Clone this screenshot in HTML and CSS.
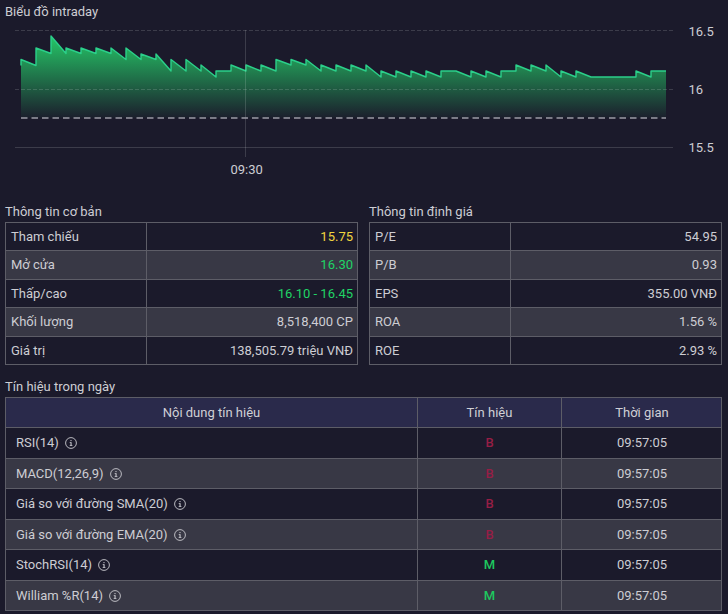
FILE: index.html
```html
<!DOCTYPE html>
<html lang="vi">
<head>
<meta charset="utf-8">
<title>Biểu đồ intraday</title>
<link rel="stylesheet" href="styles.css">
</head>
<body>
<svg width="0" height="0" class="defs" aria-hidden="true">
  <defs>
    <symbol id="info" viewBox="0 0 12 12">
      <circle cx="6" cy="6" r="5.4" fill="none" stroke="currentColor" stroke-width="0.9"/>
      <rect x="5.5" y="5.2" width="1.1" height="3.4" fill="currentColor"/>
      <rect x="4.7" y="5.1" width="1.2" height="0.8" fill="currentColor"/>
      <rect x="4.7" y="8" width="2.7" height="0.8" fill="currentColor"/>
      <circle cx="6" cy="3.6" r="0.7" fill="currentColor"/>
    </symbol>
  </defs>
</svg>
<main class="page">
  <section class="chart-section">
    <h2 class="title chart-title">Biểu đồ intraday</h2>
    <svg class="chart" width="728" height="182" viewBox="0 22 728 182">
      <defs>
        <linearGradient id="area" gradientUnits="userSpaceOnUse" x1="0" y1="36" x2="0" y2="118">
          <stop offset="0" stop-color="#25c767"/>
          <stop offset="1" stop-color="#25c767" stop-opacity="0.03"/>
        </linearGradient>
      </defs>
      <polygon fill="url(#area)" points="21,118 21,59.5 36,65.5 36,48 51,53.5 51,36 66,53.5 66,48 81,53.5 81,48 96,53.5 96,48 111,53.5 111,48 126,59.5 126,48 141,59.5 141,54 156,59.5 156,54 171,71 171,59.5 186,71 186,59.5 201,71 201,65 216,77 216,71 231,71 231,65 246,71 246,65 261,71 261,65 276,71 276,59.5 291,65 291,59.5 306,65 306,59.5 321,71 321,65 336,71 336,65 351,71 351,65 366,71 366,65 381,77 381,71 396,77 396,71 411,77 411,71 426,77 426,71 441,77 441,71 456,71 471,77 471,71 486,77 486,71 501,77 501,71 516,71 516,65 531,71 531,65 546,71 546,65 561,77 561,71 576,77 576,71 591,77 636,77 636,71 651,77 651,71 666,71 666,118"/>
      <polyline class="price" points="21,65.5 21,59.5 36,65.5 36,48 51,53.5 51,36 66,53.5 66,48 81,53.5 81,48 96,53.5 96,48 111,53.5 111,48 126,59.5 126,48 141,59.5 141,54 156,59.5 156,54 171,71 171,59.5 186,71 186,59.5 201,71 201,65 216,77 216,71 231,71 231,65 246,71 246,65 261,71 261,65 276,71 276,59.5 291,65 291,59.5 306,65 306,59.5 321,71 321,65 336,71 336,65 351,71 351,65 366,71 366,65 381,77 381,71 396,77 396,71 411,77 411,71 426,77 426,71 441,77 441,71 456,71 471,77 471,71 486,77 486,71 501,77 501,71 516,71 516,65 531,71 531,65 546,71 546,65 561,77 561,71 576,77 576,71 591,77 636,77 636,71 651,77 651,71 666,71"/>
      <line class="grid dashed" x1="15" y1="30.5" x2="673" y2="30.5"/>
      <line class="grid dashed" x1="15" y1="89.5" x2="673" y2="89.5"/>
      <line class="grid" x1="15" y1="147.5" x2="673" y2="147.5"/>
      <line class="grid" x1="245.5" y1="30" x2="245.5" y2="157"/>
      <line class="ref" x1="21" y1="118" x2="666" y2="118"/>
      <text class="axis" x="688.5" y="35.5">16.5</text>
      <text class="axis" x="688.5" y="94">16</text>
      <text class="axis" x="688.5" y="152">15.5</text>
      <text class="axis" x="230.5" y="174">09:30</text>
    </svg>
  </section>

  <section class="info-row">
    <div class="info-col">
      <h2 class="title">Thông tin cơ bản</h2>
      <table class="kv">
        <tr><td>Tham chiếu</td><td class="val ref-c">15.75</td></tr>
        <tr><td>Mở cửa</td><td class="val up">16.30</td></tr>
        <tr><td>Thấp/cao</td><td class="val up">16.10 - 16.45</td></tr>
        <tr><td>Khối lượng</td><td class="val">8,518,400 CP</td></tr>
        <tr><td>Giá trị</td><td class="val">138,505.79 triệu VNĐ</td></tr>
      </table>
    </div>
    <div class="info-col">
      <h2 class="title">Thông tin định giá</h2>
      <table class="kv">
        <tr><td>P/E</td><td class="val">54.95</td></tr>
        <tr><td>P/B</td><td class="val">0.93</td></tr>
        <tr><td>EPS</td><td class="val">355.00 VNĐ</td></tr>
        <tr><td>ROA</td><td class="val">1.56 %</td></tr>
        <tr><td>ROE</td><td class="val">2.93 %</td></tr>
      </table>
    </div>
  </section>

  <section class="signals">
    <h2 class="title">Tín hiệu trong ngày</h2>
    <table class="sig">
      <colgroup><col class="c1"><col class="c2"><col class="c3"></colgroup>
      <thead>
        <tr><th>Nội dung tín hiệu</th><th>Tín hiệu</th><th class="th-time">Thời gian</th></tr>
      </thead>
      <tbody>
        <tr><td class="name">RSI(14)<svg class="ico"><use href="#info"/></svg></td><td class="s sell">B</td><td class="t">09:57:05</td></tr>
        <tr><td class="name">MACD(12,26,9)<svg class="ico"><use href="#info"/></svg></td><td class="s sell">B</td><td class="t">09:57:05</td></tr>
        <tr><td class="name">Giá so với đường SMA(20)<svg class="ico"><use href="#info"/></svg></td><td class="s sell">B</td><td class="t">09:57:05</td></tr>
        <tr><td class="name">Giá so với đường EMA(20)<svg class="ico"><use href="#info"/></svg></td><td class="s sell">B</td><td class="t">09:57:05</td></tr>
        <tr><td class="name">StochRSI(14)<svg class="ico"><use href="#info"/></svg></td><td class="s buy">M</td><td class="t">09:57:05</td></tr>
        <tr><td class="name">William %R(14)<svg class="ico"><use href="#info"/></svg></td><td class="s buy">M</td><td class="t">09:57:05</td></tr>
      </tbody>
    </table>
  </section>
</main>
</body>
</html>
```
FILE: styles.css
```css
* { box-sizing: border-box; }
html, body { margin: 0; padding: 0; }
body {
  background: #1b1a2b;
  color: #cdcdd3;
  font-family: Roboto, "Liberation Sans", sans-serif;
  font-size: 13px;
  width: 728px;
  height: 614px;
  overflow: hidden;
}
.defs { position: absolute; }
.page { padding: 0 6px 0 5px; }
.title {
  margin: 0;
  font-size: 13px;
  font-weight: 400;
  line-height: 15px;
  color: #cdcdd3;
}
.chart-section { height: 204px; padding-top: 4px; }
.chart { display: block; margin: 3px 0 0 -5px; }
.grid { stroke: rgba(255, 255, 255, 0.15); stroke-width: 1; }
.dashed { stroke-dasharray: 4 2; }
.ref { stroke: #9b9ba5; stroke-width: 1.5; stroke-dasharray: 6.5 4; }
.price { fill: none; stroke: #2bd08a; stroke-width: 1.4; stroke-linejoin: round; }
.axis { fill: #cdcdd3; font-size: 13px; }

.info-row { display: flex; gap: 11px; }
.info-col { flex: 1 1 0; }
.info-col .title { margin-bottom: 3px; }
table { border-collapse: collapse; width: 100%; table-layout: fixed; }
td, th { border: 1px solid #5d5d67; padding: 0; }
.kv { height: 143px; }
.kv td { height: 28.4px; padding: 0 4px 0.5px 5px; }
.kv td:first-child { width: 141px; }
.kv tr:nth-child(even) td { background: #383845; }
.val { text-align: right; }
.ref-c { color: #f0d53f; }
.up { color: #20d465; }

.signals { margin-top: 14px; }
.signals .title { margin-bottom: 3px; }
.c1 { width: 412px; }
.c2 { width: 144px; }
.sig th {
  height: 30px;
  background: #2a2a4b;
  font-weight: 400;
  color: #d0d0d6;
  text-align: center;
}
.sig .th-time { padding-left: 1px; }
.sig td { height: 30.5px; padding-bottom: 0.5px; }
.sig tbody tr:nth-child(even) td { background: #383845; }
.sig .name { padding-left: 10px; }
.ico { width: 12px; height: 12px; margin-left: 6px; vertical-align: -2px; color: #c9c9cf; }
.s, .t { text-align: center; }
.sig .t { padding-left: 1px; }
.sell { color: #961e45; font-weight: 500; }
.buy { color: #1ec95f; font-weight: 500; }
```
